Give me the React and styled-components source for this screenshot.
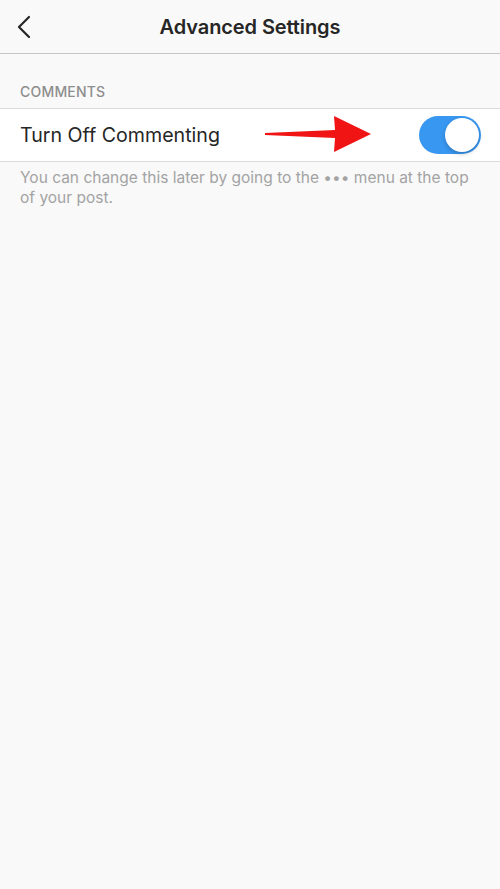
import React, { useState } from 'react';
import styled, { createGlobalStyle } from 'styled-components';

const GlobalStyle = createGlobalStyle`
  html, body {
    margin: 0;
    padding: 0;
    background: #f9f9f9;
  }
  body {
    font-family: Inter, "Noto Sans", "Liberation Sans", sans-serif;
    -webkit-font-smoothing: antialiased;
  }
`

const Screen = styled.div`
  width: 500px;
  height: 889px;
  background: #f9f9f9;
  display: flex;
  flex-direction: column;
`

const Header = styled.header`
  height: 54px;
  display: grid;
  grid-template-columns: 60px 1fr 60px;
  align-items: center;
  border-bottom: 1px solid #c6c6c6;
  box-sizing: border-box;
  h1 {
    margin: 0;
    text-align: center;
    font-size: 20px;
    font-weight: 600;
    color: #262626;
    letter-spacing: -0.1px;
  }
`

const BackButton = styled.button`
  border: none;
  background: none;
  padding: 0 0 0 16px;
  height: 100%;
  display: flex;
  align-items: center;
  cursor: pointer;
`

const SectionLabel = styled.div`
  padding: 29px 20px 8px;
  font-size: 14px;
  font-weight: 500;
  color: #8e8e8e;
  letter-spacing: 0.2px;
`

const Row = styled.div`
  height: 54px;
  box-sizing: border-box;
  background: #fff;
  border-top: 1px solid #dbdbdb;
  border-bottom: 1px solid #dbdbdb;
  display: flex;
  align-items: center;
  padding: 0 19px 0 20px;
  .label {
    font-size: 19.6px;
    color: #262626;
    flex: 1;
  }
`

const Arrow = styled.svg`
  width: 108px;
  height: 40px;
  margin-right: 46px;
  margin-top: -3px;
`

const Switch = styled.button`
  width: 62px;
  height: 38px;
  border-radius: 19px;
  border: none;
  padding: 0;
  background: ${p => (p.on ? '#3897f0' : '#e5e5e5')};
  display: flex;
  align-items: center;
  justify-content: ${p => (p.on ? 'flex-end' : 'flex-start')};
  cursor: pointer;
  .knob {
    width: 34px;
    height: 34px;
    margin: 0 2px;
    border-radius: 50%;
    background: #fff;
    box-shadow: 0 2px 4px rgba(0, 0, 0, 0.2);
  }
`

const Note = styled.p`
  margin: 0;
  padding: 6px 28px 9px 20px;
  font-size: 15.5px;
  line-height: 20px;
  color: #a3a3a3;
`

const App = () => {
  const [on, setOn] = useState(true);

  return (
    <>
      <GlobalStyle />
      <Screen>
        <Header>
          <BackButton aria-label="back">
            <svg width="16" height="24" viewBox="0 0 16 24">
              <path d="M13 2 L3 12 L13 22" fill="none" stroke="#262626" strokeWidth="2.2" strokeLinecap="round" strokeLinejoin="round" />
            </svg>
          </BackButton>
          <h1>Advanced Settings</h1>
          <div />
        </Header>
        <SectionLabel>COMMENTS</SectionLabel>
        <Row>
          <span className='label'>Turn Off Commenting</span>
          <Arrow viewBox="0 0 108 40">
            <path d="M0 19 L70 16 L69 2 L106 20 L69 38 L70 24 L0 21 Z" fill="#f01414" />
          </Arrow>
          <Switch on={on ? 1 : 0} onClick={() => setOn(!on)}>
            <span className='knob' />
          </Switch>
        </Row>
        <Note>You can change this later by going to the ••• menu at the top of your post.</Note>
      </Screen>
    </>
  );
};

export default App;
